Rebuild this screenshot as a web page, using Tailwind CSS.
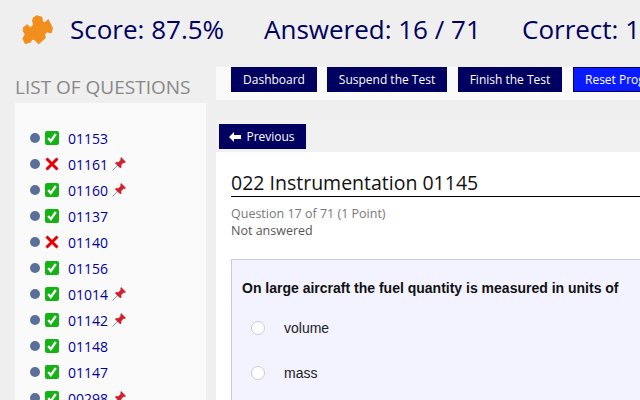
<!DOCTYPE html>
<html lang="en">

<head>
    <meta charset="UTF-8">
    <title>Test</title>
    <script src="https://cdn.jsdelivr.net/npm/@tailwindcss/browser@4"></script>
</head>

<body class="w-[640px] h-[400px] overflow-hidden bg-[#efefef] font-['Open_Sans',sans-serif]">
    <header class="h-[59px] pl-[22px] flex items-center whitespace-nowrap text-[#000060] text-[26px]">
        <svg class="w-[32px] h-[30px] shrink-0 mr-[16px]" viewBox="0 0 32 30">
            <path fill="#f28e1c" stroke="#f28e1c" stroke-width="1.2" stroke-linejoin="round" d="M11.3 3.3L14.7.8l5 1.5.6 4.4 2.7 1 3.3-2.7 4 8.3-1.3 4.4-4.3-1-2.4 2.3 1 3.5-6.6 6-3.3-3.3-3.3-1.7-1.7 3.4-5 1.6-2.4-5 2.4-4.3-2-3.3.3-3.3 3.4-2.7 3.3 3.3 3.3-3.3-1-4z" />
        </svg>
        <span class="w-[194px] shrink-0">Score: 87.5%</span>
        <span class="w-[258px] shrink-0">Answered: 16 / 71</span>
        <span>Correct: 14</span>
    </header>

    <div class="flex items-start">
        <aside class="w-[216px] shrink-0 pl-[15px]">
            <h2 class="text-[19px] leading-[26px] mt-[15px] mb-[3px] text-[#888] whitespace-nowrap">LIST OF QUESTIONS</h2>
            <ul class="w-[191px] h-[300px] bg-[#fafafa] pt-[22px] pl-[15px] text-[14px] text-[#000099]">
                <li class="h-[26px] flex items-center">
                    <span class="w-[10px] h-[10px] rounded-full bg-[#5b6f9b] mr-[5px]"></span>
                    <svg class="w-[14px] h-[14px] mr-[9px]" viewBox="0 0 14 14"><rect width="14" height="14" rx="2" fill="#12b312" /><path d="M3.2 7l2.6 3.2L10.8 3" fill="none" stroke="#fff" stroke-width="2.3" /></svg>
                    <span>01153</span>
                </li>
                <li class="h-[26px] flex items-center">
                    <span class="w-[10px] h-[10px] rounded-full bg-[#5b6f9b] mr-[5px]"></span>
                    <svg class="w-[14px] h-[14px] mr-[9px]" viewBox="0 0 14 14"><path d="M1.5 1.5l11 11M12.5 1.5l-11 11" stroke="#e80000" stroke-width="3" /></svg>
                    <span>01161</span>
                    <svg class="w-[14px] h-[14px] ml-[4px] mb-[1px]" viewBox="0 0 14 14"><path d="M.5 13.5l6-6" stroke="#8a93a0" /><path d="M9 0l5 5-1.6 1-.9-.3-2.2 2.2.2 2.3-1.2 1.1L3 6.2l1.1-1.2 2.3.2 2.2-2.2-.3-.9z" fill="#d41f2b" /></svg>
                </li>
                <li class="h-[26px] flex items-center">
                    <span class="w-[10px] h-[10px] rounded-full bg-[#5b6f9b] mr-[5px]"></span>
                    <svg class="w-[14px] h-[14px] mr-[9px]" viewBox="0 0 14 14"><rect width="14" height="14" rx="2" fill="#12b312" /><path d="M3.2 7l2.6 3.2L10.8 3" fill="none" stroke="#fff" stroke-width="2.3" /></svg>
                    <span>01160</span>
                    <svg class="w-[14px] h-[14px] ml-[4px] mb-[1px]" viewBox="0 0 14 14"><path d="M.5 13.5l6-6" stroke="#8a93a0" /><path d="M9 0l5 5-1.6 1-.9-.3-2.2 2.2.2 2.3-1.2 1.1L3 6.2l1.1-1.2 2.3.2 2.2-2.2-.3-.9z" fill="#d41f2b" /></svg>
                </li>
                <li class="h-[26px] flex items-center">
                    <span class="w-[10px] h-[10px] rounded-full bg-[#5b6f9b] mr-[5px]"></span>
                    <svg class="w-[14px] h-[14px] mr-[9px]" viewBox="0 0 14 14"><rect width="14" height="14" rx="2" fill="#12b312" /><path d="M3.2 7l2.6 3.2L10.8 3" fill="none" stroke="#fff" stroke-width="2.3" /></svg>
                    <span>01137</span>
                </li>
                <li class="h-[26px] flex items-center">
                    <span class="w-[10px] h-[10px] rounded-full bg-[#5b6f9b] mr-[5px]"></span>
                    <svg class="w-[14px] h-[14px] mr-[9px]" viewBox="0 0 14 14"><path d="M1.5 1.5l11 11M12.5 1.5l-11 11" stroke="#e80000" stroke-width="3" /></svg>
                    <span>01140</span>
                </li>
                <li class="h-[26px] flex items-center">
                    <span class="w-[10px] h-[10px] rounded-full bg-[#5b6f9b] mr-[5px]"></span>
                    <svg class="w-[14px] h-[14px] mr-[9px]" viewBox="0 0 14 14"><rect width="14" height="14" rx="2" fill="#12b312" /><path d="M3.2 7l2.6 3.2L10.8 3" fill="none" stroke="#fff" stroke-width="2.3" /></svg>
                    <span>01156</span>
                </li>
                <li class="h-[26px] flex items-center">
                    <span class="w-[10px] h-[10px] rounded-full bg-[#5b6f9b] mr-[5px]"></span>
                    <svg class="w-[14px] h-[14px] mr-[9px]" viewBox="0 0 14 14"><rect width="14" height="14" rx="2" fill="#12b312" /><path d="M3.2 7l2.6 3.2L10.8 3" fill="none" stroke="#fff" stroke-width="2.3" /></svg>
                    <span>01014</span>
                    <svg class="w-[14px] h-[14px] ml-[4px] mb-[1px]" viewBox="0 0 14 14"><path d="M.5 13.5l6-6" stroke="#8a93a0" /><path d="M9 0l5 5-1.6 1-.9-.3-2.2 2.2.2 2.3-1.2 1.1L3 6.2l1.1-1.2 2.3.2 2.2-2.2-.3-.9z" fill="#d41f2b" /></svg>
                </li>
                <li class="h-[26px] flex items-center">
                    <span class="w-[10px] h-[10px] rounded-full bg-[#5b6f9b] mr-[5px]"></span>
                    <svg class="w-[14px] h-[14px] mr-[9px]" viewBox="0 0 14 14"><rect width="14" height="14" rx="2" fill="#12b312" /><path d="M3.2 7l2.6 3.2L10.8 3" fill="none" stroke="#fff" stroke-width="2.3" /></svg>
                    <span>01142</span>
                    <svg class="w-[14px] h-[14px] ml-[4px] mb-[1px]" viewBox="0 0 14 14"><path d="M.5 13.5l6-6" stroke="#8a93a0" /><path d="M9 0l5 5-1.6 1-.9-.3-2.2 2.2.2 2.3-1.2 1.1L3 6.2l1.1-1.2 2.3.2 2.2-2.2-.3-.9z" fill="#d41f2b" /></svg>
                </li>
                <li class="h-[26px] flex items-center">
                    <span class="w-[10px] h-[10px] rounded-full bg-[#5b6f9b] mr-[5px]"></span>
                    <svg class="w-[14px] h-[14px] mr-[9px]" viewBox="0 0 14 14"><rect width="14" height="14" rx="2" fill="#12b312" /><path d="M3.2 7l2.6 3.2L10.8 3" fill="none" stroke="#fff" stroke-width="2.3" /></svg>
                    <span>01148</span>
                </li>
                <li class="h-[26px] flex items-center">
                    <span class="w-[10px] h-[10px] rounded-full bg-[#5b6f9b] mr-[5px]"></span>
                    <svg class="w-[14px] h-[14px] mr-[9px]" viewBox="0 0 14 14"><rect width="14" height="14" rx="2" fill="#12b312" /><path d="M3.2 7l2.6 3.2L10.8 3" fill="none" stroke="#fff" stroke-width="2.3" /></svg>
                    <span>01147</span>
                </li>
                <li class="h-[26px] flex items-center">
                    <span class="w-[10px] h-[10px] rounded-full bg-[#5b6f9b] mr-[5px]"></span>
                    <svg class="w-[14px] h-[14px] mr-[9px]" viewBox="0 0 14 14"><rect width="14" height="14" rx="2" fill="#12b312" /><path d="M3.2 7l2.6 3.2L10.8 3" fill="none" stroke="#fff" stroke-width="2.3" /></svg>
                    <span>00298</span>
                    <svg class="w-[14px] h-[14px] ml-[4px] mb-[1px]" viewBox="0 0 14 14"><path d="M.5 13.5l6-6" stroke="#8a93a0" /><path d="M9 0l5 5-1.6 1-.9-.3-2.2 2.2.2 2.3-1.2 1.1L3 6.2l1.1-1.2 2.3.2 2.2-2.2-.3-.9z" fill="#d41f2b" /></svg>
                </li>
            </ul>
        </aside>

        <main class="flex-1 min-w-0 pt-[8px]">
            <div class="h-[33px] bg-[#fafafa] pl-[15px] flex items-start gap-[10px] text-[12px] text-white font-medium whitespace-nowrap">
                <a class="w-[86px] h-[25px] shrink-0 bg-[#000060] flex items-center justify-center">Dashboard</a>
                <a class="w-[120px] h-[25px] shrink-0 bg-[#000060] flex items-center justify-center">Suspend the Test</a>
                <a class="w-[104px] h-[25px] shrink-0 bg-[#000060] flex items-center justify-center ml-[1px]">Finish the Test</a>
                <a class="w-[110px] h-[25px] shrink-0 bg-[#0a1cff] border border-[#000060] pl-[11px] flex items-center ml-[1px]">Reset Progress</a>
            </div>
            <div class="mt-[20px] pt-[4px] pl-[3px] h-[32px] bg-[#f1f1f1]">
                <a class="w-[87px] h-[25px] bg-[#000060] text-white text-[12px] font-medium flex items-center justify-center gap-[5px] pr-[1px]">
                    <svg class="w-[12px] h-[10px]" viewBox="0 0 12 10"><path d="M0 5l5-5v3h7v4H5v3z" fill="#fff" /></svg>
                    Previous
                </a>
            </div>
            <section class="bg-white h-[248px] pl-[15px] pt-[18px]">
                <h1 class="text-[19.5px] leading-[25px] h-[27px] text-[#111] border-b border-black whitespace-nowrap">022 Instrumentation 01145</h1>
                <p class="mt-[8px] text-[12.5px] leading-[17px] text-[#777]">Question 17 of 71 (1 Point)</p>
                <p class="text-[12.5px] leading-[17px] text-[#555]">Not answered</p>
                <div class="mt-[20px] w-[500px] h-[200px] bg-[#f3f3ff] border border-[#c8c8ee] pl-[10px] font-['Liberation_Sans',sans-serif] text-[#222]">
                    <p class="mt-[19px] text-[14px] leading-[18px] font-bold text-[#111] whitespace-nowrap">On large aircraft the fuel quantity is measured in units of</p>
                    <label class="flex items-center h-[20px] mt-[21px] text-[14px]">
                        <span class="w-[14px] h-[14px] ml-[9px] mr-[19px] rounded-full bg-white border border-[#ccc]"></span>volume
                    </label>
                    <label class="flex items-center h-[20px] mt-[25px] text-[14px]">
                        <span class="w-[14px] h-[14px] ml-[9px] mr-[19px] rounded-full bg-white border border-[#ccc]"></span>mass
                    </label>
                </div>
            </section>
        </main>
    </div>
</body>

</html>
